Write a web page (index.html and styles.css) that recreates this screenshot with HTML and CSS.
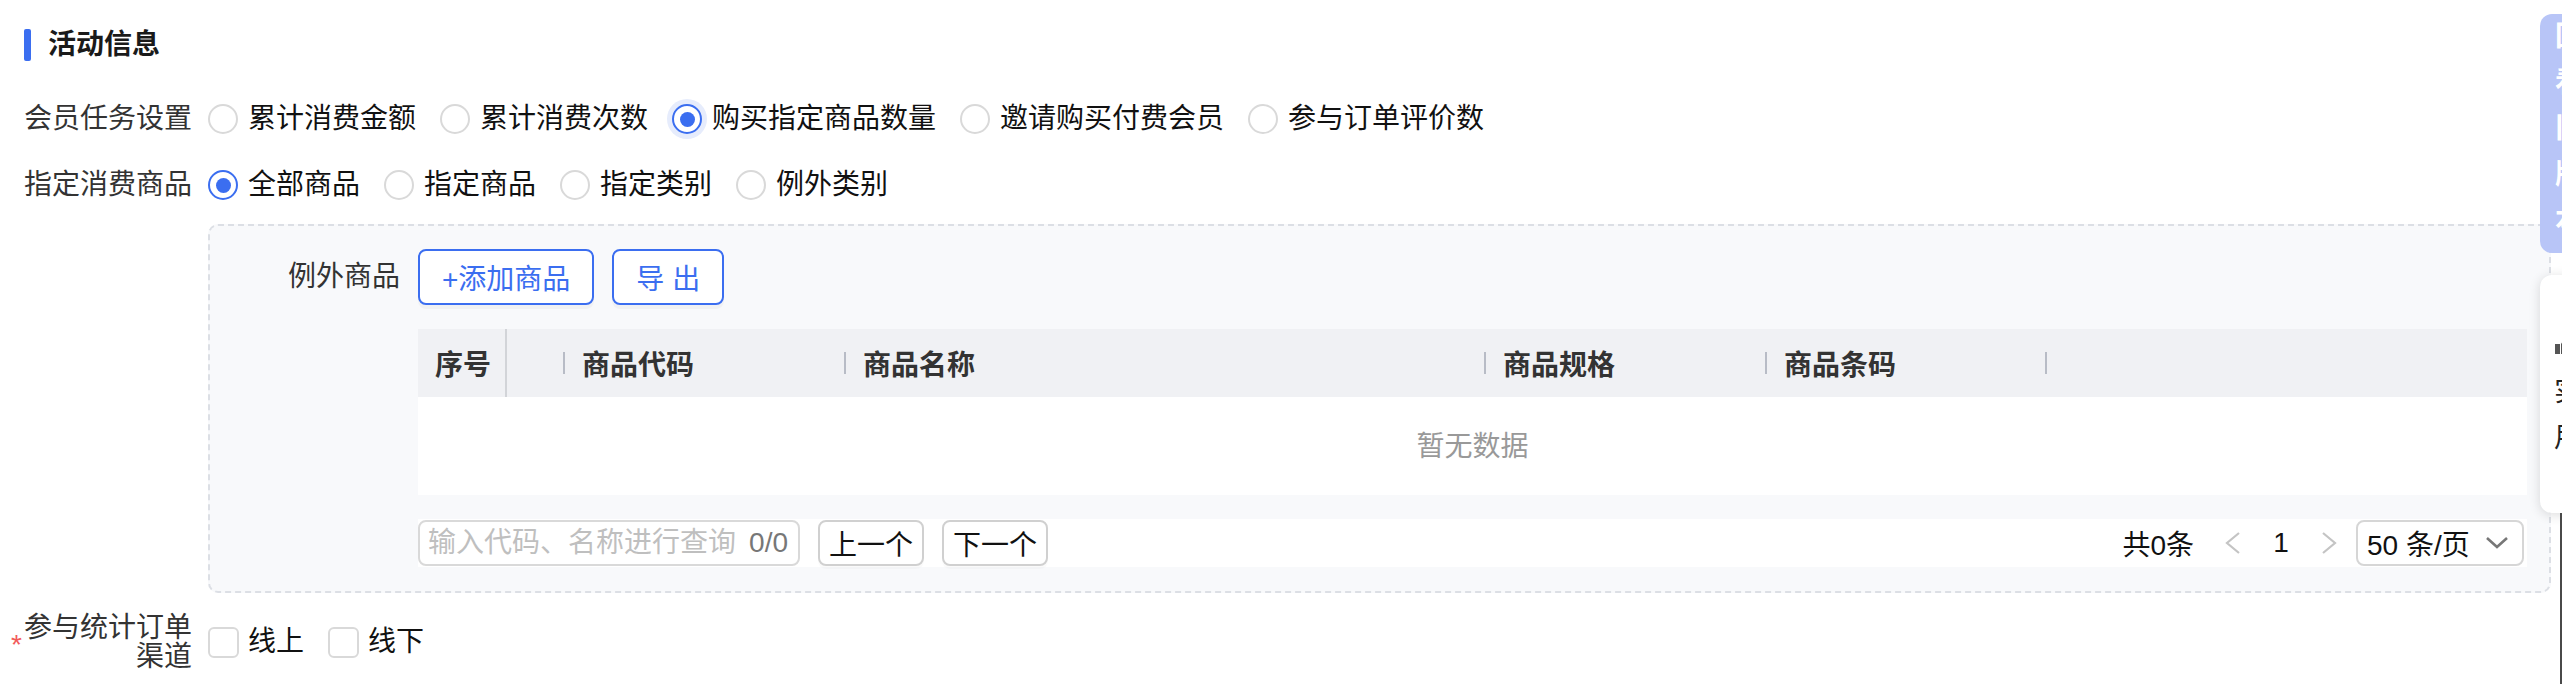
FILE: index.html
```html
<!DOCTYPE html>
<html lang="zh-CN">
<head>
<meta charset="utf-8">
<title>活动信息</title>
<link rel="stylesheet" href="styles.css">
</head>
<body>
<div class="page">
  <div class="section-title"><span class="bar"></span><span>活动信息</span></div>

  <div class="form">
    <div class="form-item item-task">
      <div class="label">会员任务设置</div>
      <div class="options">
        <label class="radio"><span class="dot"></span><span>累计消费金额</span></label>
        <label class="radio"><span class="dot"></span><span>累计消费次数</span></label>
        <label class="radio checked focus"><span class="dot"></span><span>购买指定商品数量</span></label>
        <label class="radio"><span class="dot"></span><span>邀请购买付费会员</span></label>
        <label class="radio"><span class="dot"></span><span>参与订单评价数</span></label>
      </div>
    </div>

    <div class="form-item">
      <div class="label">指定消费商品</div>
      <div class="options">
        <label class="radio checked"><span class="dot"></span><span>全部商品</span></label>
        <label class="radio"><span class="dot"></span><span>指定商品</span></label>
        <label class="radio"><span class="dot"></span><span>指定类别</span></label>
        <label class="radio"><span class="dot"></span><span>例外类别</span></label>
      </div>
    </div>

    <div class="form-item item-box">
      <div class="label-empty"></div>
      <div class="box">
        <div class="box-label">例外商品</div>
        <div class="box-main">
          <div class="btns">
            <button class="btn-primary">+添加商品</button>
            <button class="btn-primary">导 出</button>
          </div>
          <div class="table">
            <div class="thead">
              <div class="th fixed">序号</div>
              <div class="th sep"></div>
              <div class="th sep">商品代码</div>
              <div class="th sep">商品名称</div>
              <div class="th sep">商品规格</div>
              <div class="th sep">商品条码</div>
              <div class="th"></div>
            </div>
            <div class="tbody">暂无数据</div>
          </div>
          <div class="pager">
            <div class="search">
              <input class="search-input" type="text" placeholder="输入代码、名称进行查询">
              <span class="count">0/0</span>
            </div>
            <button class="btn-default">上一个</button>
            <button class="btn-default">下一个</button>
            <div class="spacer"></div>
            <span class="total">共0条</span>
            <span class="nav disabled"><svg width="16" height="22" viewBox="0 0 16 22"><polyline points="14,1 2,11 14,21" fill="none" stroke="#c4c4c4" stroke-width="2.2"/></svg></span>
            <span class="nav page-num">1</span>
            <span class="nav disabled"><svg width="16" height="22" viewBox="0 0 16 22"><polyline points="2,1 14,11 2,21" fill="none" stroke="#c4c4c4" stroke-width="2.2"/></svg></span>
            <div class="select">
              <span>50 条/页</span>
              <svg width="22" height="12" viewBox="0 0 22 12"><polyline points="1,1 11,10 21,1" fill="none" stroke="#777" stroke-width="2.6"/></svg>
            </div>
          </div>
        </div>
      </div>
    </div>

    <div class="form-item item-channel">
      <div class="label req"><span class="star">*</span><span class="txt">参与统计订单渠道</span></div>
      <div class="options">
        <label class="checkbox"><span class="cb"></span><span>线上</span></label>
        <label class="checkbox"><span class="cb"></span><span>线下</span></label>
      </div>
    </div>
  </div>
</div>

<div class="float-panel">
  <span>回</span><span>看</span><span>旧</span><span>版</span><span>本</span>
</div>
<div class="float-card">
  <svg class="card-icon" width="22" height="20" viewBox="0 0 22 20"><path d="M1 9h5v10H1z M7 9l5-8c2 0 3 1 3 3l-1 4h6c1 0 2 1 2 2l-2 8c0 1-1 1-2 1H7z" fill="#555"/></svg>
  <span>实</span>
  <span>用</span>
</div>
<div class="edge-line"></div>
</body>
</html>
```

FILE: styles.css
```css
* {
  box-sizing: border-box;
  margin: 0;
  padding: 0;
}

html, body {
  width: 2562px;
  height: 684px;
  overflow: hidden;
  background: #fff;
}

body {
  position: relative;
  font-family: "Liberation Sans", "Noto Sans CJK SC", sans-serif;
  font-size: 28px;
  color: #1f1f1f;
}

.page {
  padding: 25px 11px 0 0;
}

.section-title {
  display: flex;
  align-items: center;
  gap: 17px;
  height: 40px;
  padding-left: 24px;
  line-height: 40px;
  font-weight: 700;
  color: #1a1a1a;
}

.section-title .bar {
  width: 7px;
  height: 32px;
  background: #3b6ef0;
  border-radius: 2px;
}

.form {
  margin-top: 32px;
  display: flex;
  flex-direction: column;
  gap: 17px;
}

.form-item {
  display: grid;
  grid-template-columns: 192px 1fr;
  column-gap: 16px;
  align-items: center;
}

.item-task {
  margin-bottom: 5px;
}

.item-box {
  align-items: start;
}

.item-channel {
  margin-top: 3px;
}

.label {
  text-align: right;
  line-height: 44px;
  white-space: nowrap;
  color: #333;
}

.options {
  display: flex;
  align-items: center;
  height: 44px;
}

.radio,
.checkbox {
  display: flex;
  align-items: center;
  margin-right: 24px;
  line-height: 44px;
  color: #111;
}

.radio .dot {
  display: flex;
  align-items: center;
  justify-content: center;
  width: 30px;
  height: 30px;
  margin-right: 10px;
  border: 2px solid #d9d9d9;
  border-radius: 50%;
  background: #fff;
}

.radio.checked .dot {
  border-color: #3b6ef0;
}

.radio.checked .dot::after {
  content: "";
  width: 15px;
  height: 15px;
  border-radius: 50%;
  background: #3b6ef0;
}

.radio.focus .dot {
  box-shadow: 0 0 0 5px #e6ecfc;
}

.checkbox .cb {
  width: 31px;
  height: 31px;
  margin-right: 9px;
  border: 2px solid #d9d9d9;
  border-radius: 6px;
  background: #fff;
}

/* dashed box */
.box {
  display: grid;
  grid-template-columns: 190px 1fr;
  column-gap: 18px;
  align-items: start;
  padding: 23px 22px 24px 0;
  border: 2px dashed #dcdfe5;
  border-radius: 10px;
  background: #f8f9fb;
}

.box-label {
  text-align: right;
  line-height: 56px;
  color: #333;
}

.btns {
  display: flex;
  gap: 18px;
  height: 56px;
  margin-bottom: 24px;
}

.btn-primary {
  height: 56px;
  padding: 0 22px;
  border: 2px solid #3b6ef0;
  border-radius: 8px;
  background: #fff;
  color: #3b6ef0;
  font-family: inherit;
  font-size: 28px;
  box-shadow: 0 4px 0 rgba(0, 0, 0, 0.03);
}

.table {
  background: #fff;
}

.thead {
  display: grid;
  grid-template-columns: 89px 58px 281px 640px 281px 280px 1fr;
  height: 68px;
  background: #f0f1f4;
}

.th {
  position: relative;
  display: flex;
  align-items: center;
  padding-left: 17px;
  font-weight: 700;
  color: #333;
}

.th.fixed {
  border-right: 2px solid #d2d4d8;
}

.th.sep::after {
  content: "";
  position: absolute;
  right: 0;
  top: 23px;
  width: 2px;
  height: 22px;
  background: #b8bcc6;
}

.tbody {
  display: flex;
  align-items: center;
  justify-content: center;
  height: 98px;
  padding-bottom: 4px;
  margin-bottom: 2px;
  color: #999;
}

.pager {
  display: flex;
  align-items: center;
  height: 48px;
  margin-top: 24px;
  padding-right: 3px;
  background: #fff;
}

.search {
  display: flex;
  align-items: center;
  justify-content: space-between;
  width: 382px;
  height: 46px;
  padding: 0 10px 0 8px;
  border: 2px solid #d9d9d9;
  border-radius: 8px;
  background: #fff;
}

.search-input {
  width: 310px;
  border: none;
  outline: none;
  background: transparent;
  font-family: inherit;
  font-size: 28px;
  color: #333;
}

.search-input::placeholder {
  color: #bfbfbf;
}

.count {
  color: #777;
}

.btn-default {
  height: 46px;
  margin-left: 18px;
  padding: 0 9px;
  border: 2px solid #d0d0d0;
  border-radius: 8px;
  background: #fff;
  color: #111;
  font-family: inherit;
  font-size: 28px;
  box-shadow: 0 3px 0 rgba(0, 0, 0, 0.02);
}

.spacer {
  flex: 1;
}

.total {
  margin-right: 16px;
  color: #111;
}

.nav {
  display: flex;
  align-items: center;
  justify-content: center;
  width: 46px;
  height: 46px;
  margin-right: 2px;
  color: #111;
}

.select {
  display: flex;
  align-items: center;
  justify-content: space-between;
  width: 168px;
  height: 46px;
  margin-left: 2px;
  padding: 0 14px 0 9px;
  border: 2px solid #d6d6d6;
  border-radius: 8px;
  background: #fff;
  color: #111;
}

/* label with required mark */
.label.req {
  display: flex;
  justify-content: flex-end;
  align-items: center;
  line-height: 29px;
  white-space: normal;
}

.req .star {
  margin-top: 4px;
  margin-right: 2px;
  color: #f25a5a;
}

.req .txt {
  width: 168px;
  text-align: right;
}

/* floating widgets on the right edge */
.float-panel {
  position: absolute;
  left: 2540px;
  top: 14px;
  width: 120px;
  height: 239px;
  display: flex;
  flex-direction: column;
  padding-left: 15px;
  border-radius: 12px;
  background: #b8c5f7;
  color: #fff;
  font-weight: 700;
  line-height: 46px;
}

.float-card {
  position: absolute;
  left: 2540px;
  top: 275px;
  width: 200px;
  height: 238px;
  display: flex;
  flex-direction: column;
  align-items: flex-start;
  padding: 60px 0 0 14px;
  border-radius: 12px;
  background: #fff;
  box-shadow: 0 2px 12px rgba(0, 0, 0, 0.14);
  color: #222;
  line-height: 46px;
}

.card-icon {
  margin-bottom: 14px;
}

.edge-line {
  position: absolute;
  left: 2560px;
  top: 513px;
  width: 2px;
  height: 171px;
  background: #4a4a4a;
}
```
